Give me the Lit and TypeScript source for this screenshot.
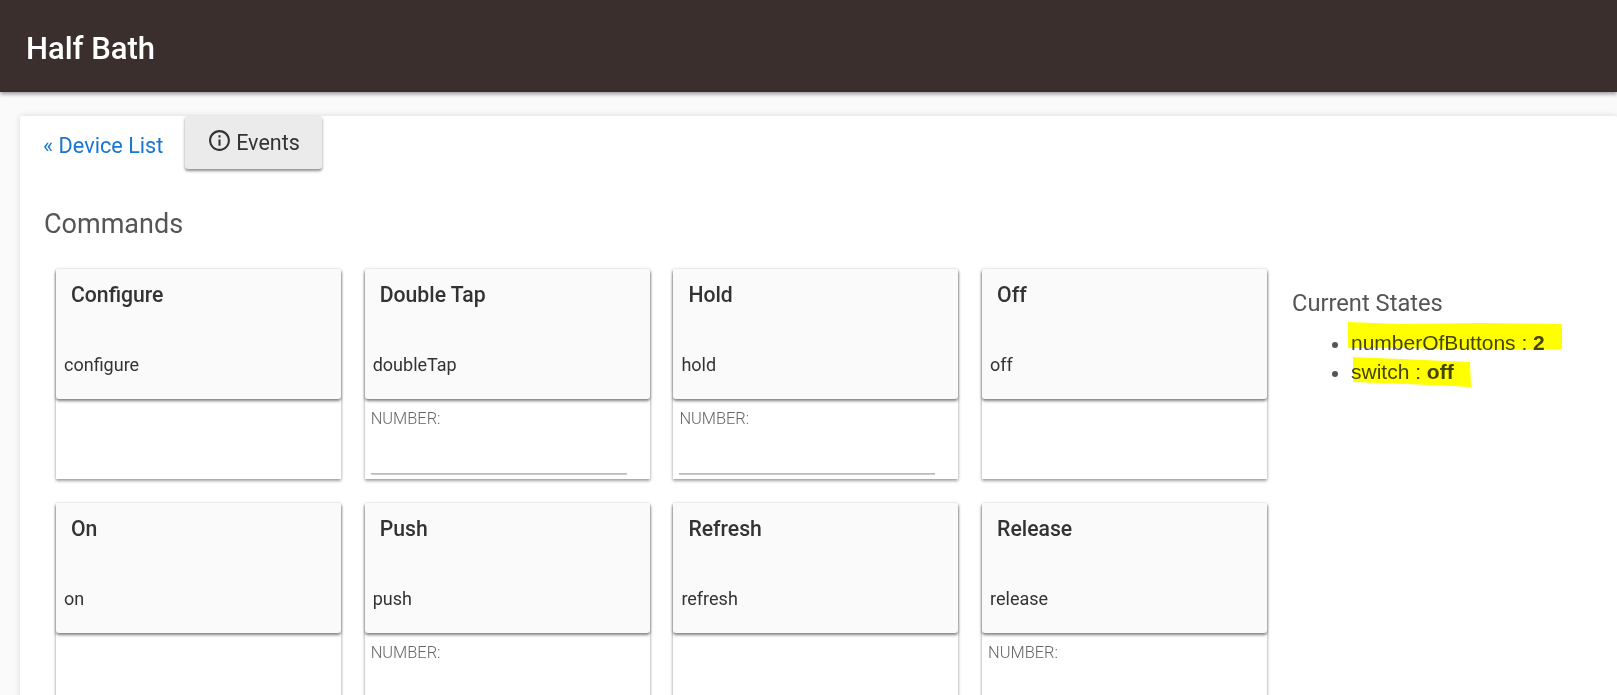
import { LitElement, html, css, svg } from "lit";
import { customElement } from "lit/decorators.js";

const tiles = [
  { t: "Configure", c: "configure", n: false },
  { t: "Double Tap", c: "doubleTap", n: true },
  { t: "Hold", c: "hold", n: true },
  { t: "Off", c: "off", n: false },
  { t: "On", c: "on", n: false },
  { t: "Push", c: "push", n: true },
  { t: "Refresh", c: "refresh", n: false },
  { t: "Release", c: "release", n: true },
];

@customElement("app-root")
export class AppRoot extends LitElement {
  static styles = css`
    :host { display: block; height: 695px; overflow: hidden; background: #fafafa; font-family: Roboto, sans-serif; color: #333; position: relative; }
    .bar { height: 92px; background: #3a2f2d; box-shadow: 0 2px 4px rgba(0,0,0,.4); display: flex; align-items: center; padding-left: 26px; position: relative; z-index: 2; }
    .bar h1 { margin: 0; font-size: 31px; font-weight: 500; color: #fff; line-height: 1; position: relative; top: 2px; }
    .card { margin: 24px 0 0 20px; background: #fff; border-radius: 2px; box-shadow: 0 0 6px rgba(0,0,0,.14); height: 620px; }
    .nav { display: flex; align-items: flex-start; height: 54px; }
    .back { color: #1976d2; font-size: 21.7px; line-height: 24px; text-decoration: none; margin: 18px 0 0 23px; width: 142px; flex: none; }
    .events { width: 137px; height: 53px; background: #ebebeb; border-radius: 3px; box-shadow: 0 2px 3px rgba(0,0,0,.45); display: flex; align-items: center; justify-content: center; gap: 4px; font-size: 21.5px; color: #333; padding-bottom: 0; box-sizing: border-box; flex: none; }
    .events svg { width: 25px; height: 25px; display: block; position: relative; top: -2px; }
    h2.cmd { margin: 38px 0 0 24px; font-size: 27px; line-height: 32px; font-weight: 400; color: #555; }
    .main { display: flex; margin: 29px 0 0 36px; }
    .grid { display: grid; grid-template-columns: repeat(4, 285px); column-gap: 23.7px; row-gap: 24px; width: 1212px; flex: none; }
    .tile { height: 210px; background: #fff; box-shadow: 0 2px 3px rgba(0,0,0,.35), 0 0 3px rgba(0,0,0,.12); position: relative; }
    .head { height: 130px; background: #fafafa; border-radius: 3px; box-shadow: 0 2px 3px rgba(0,0,0,.5); padding: 14px 8px 0; box-sizing: border-box; }
    .title { font-size: 21.2px; font-weight: 500; line-height: 24px; color: #333; margin-left: 7px; }
    .name { font-size: 18px; line-height: 22px; color: #333; margin-top: 47px; }
    .field { padding: 10px 6px 0; }
    .label { font-size: 16.4px; line-height: 18px; color: #666; font-weight: 300; margin-top: 1px; }
    .line { margin-top: 45px; height: 1px; width: 256px; background: #bbb; border-bottom: 1px solid #ccc; }
    .states { margin: 20px 0 0 24px; flex: 1; color: #555; }
    .states h3 { margin: 0; font-size: 23.7px; font-weight: 400; line-height: 28px; color: #555; }
    ul { margin: 11px 0 0; padding: 0 0 0 59px; list-style: none; font-family: "Liberation Sans", Arial, sans-serif; }
    li { font-size: 21px; line-height: 29px; position: relative; color: #444; white-space: nowrap; }
    li::before { content: ""; position: absolute; left: -19px; top: 14px; width: 6px; height: 6px; border-radius: 50%; background: #555; }
    b { font-weight: 700; }
    .hl { position: absolute; left: 0; top: 0; width: 1617px; height: 695px; mix-blend-mode: multiply; pointer-events: none; z-index: 3; }
  `;

  render() {
    return html`
      <div class="bar"><h1>Half Bath</h1></div>
      <div class="card">
        <div class="nav">
          <a class="back" href="#">« Device List</a>
          <div class="events">
            <svg viewBox="0 0 24 24" fill="#333"><path d="M11 7h2v2h-2zm0 4h2v6h-2zm1-9C6.48 2 2 6.48 2 12s4.48 10 10 10 10-4.48 10-10S17.52 2 12 2zm0 18c-4.41 0-8-3.59-8-8s3.59-8 8-8 8 3.59 8 8-3.59 8-8 8z"/></svg>
            <span>Events</span>
          </div>
        </div>
        <h2 class="cmd">Commands</h2>
        <div class="main">
          <div class="grid">
            ${tiles.map(x => html`
              <div class="tile">
                <div class="head">
                  <div class="title">${x.t}</div>
                  <div class="name">${x.c}</div>
                </div>
                ${x.n ? html`<div class="field"><div class="label">NUMBER:</div><div class="line"></div></div>` : ""}
              </div>`)}
          </div>
          <div class="states">
            <h3>Current States</h3>
            <ul>
              <li>numberOfButtons : <b>2</b></li>
              <li>switch : <b>off</b></li>
            </ul>
          </div>
        </div>
      </div>
      <svg class="hl" viewBox="0 0 1617 695">
        ${svg`<path fill="#ffff00" d="M1348 322 L1400 324 L1480 323 L1562 324 L1562 349 L1500 350 L1400 348 L1348 348 Z"/>
        <path fill="#ffff00" d="M1353 357 L1400 359 L1470 362 L1471 387 L1430 385 L1380 383 L1353 382 Z"/>`}
      </svg>
    `;
  }
}
